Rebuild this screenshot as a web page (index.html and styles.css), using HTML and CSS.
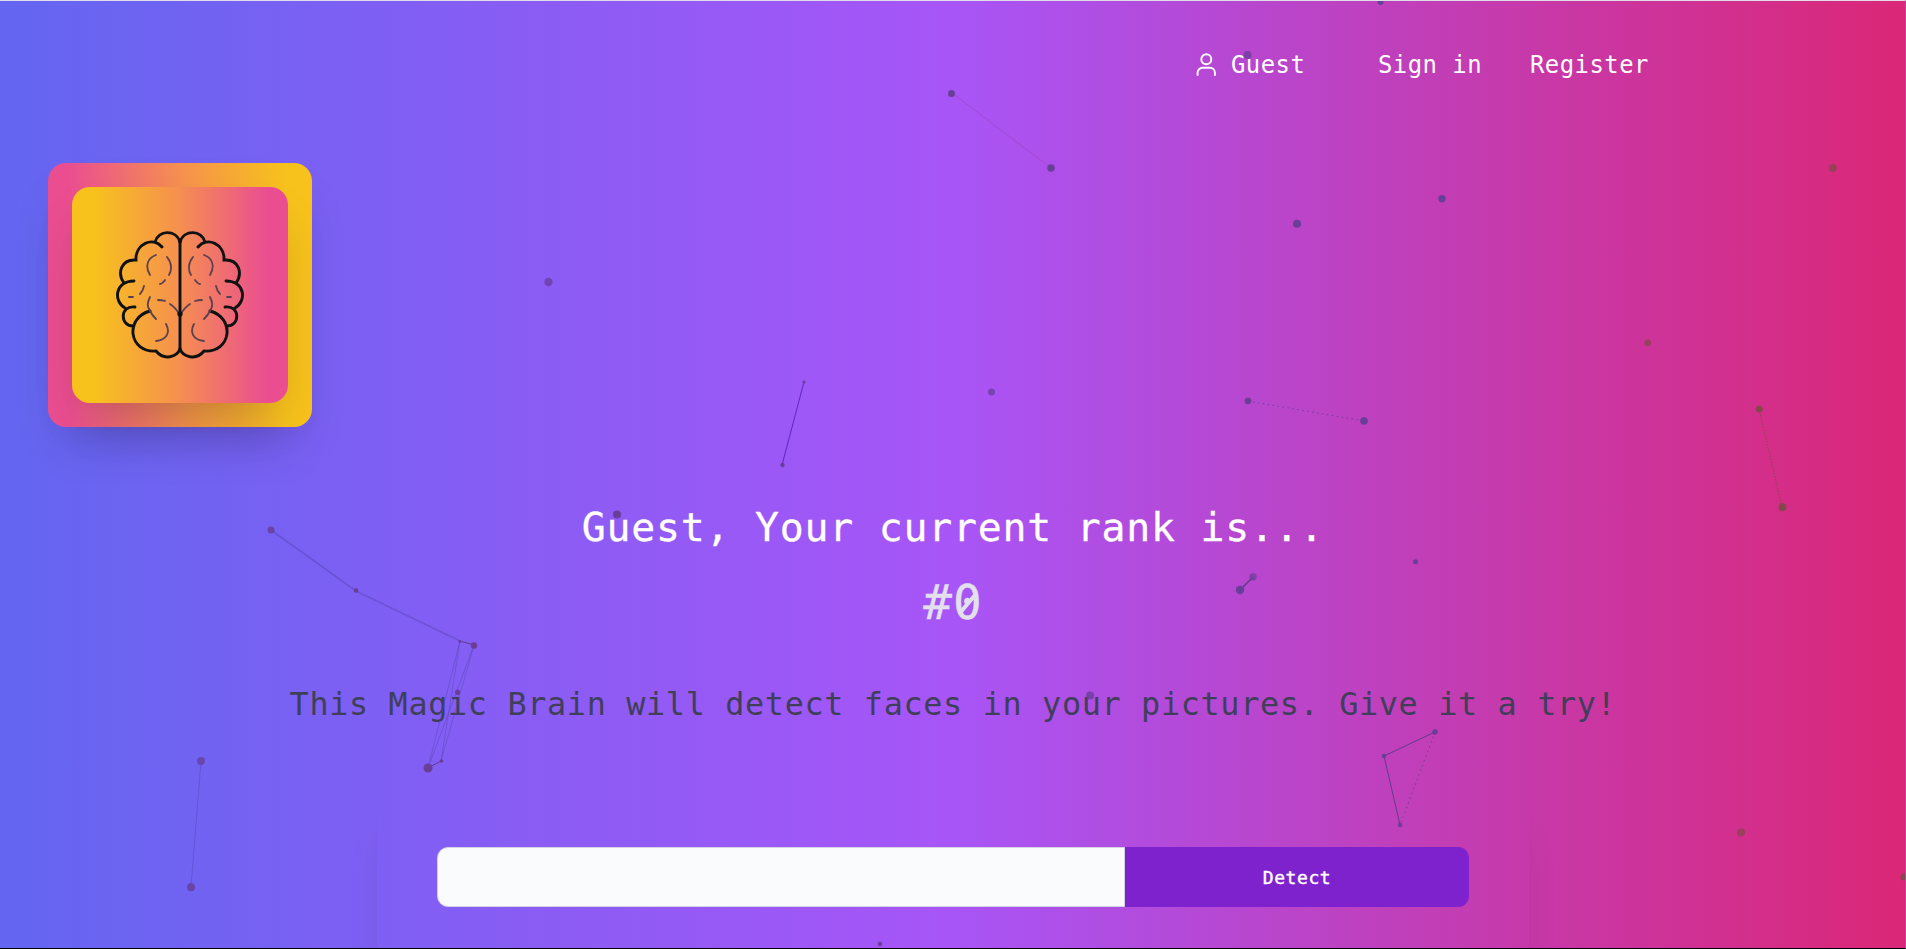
FILE: index.html
```html
<!DOCTYPE html>
<html lang="en">
<head>
<meta charset="utf-8">
<title>Magic Brain</title>
<link rel="stylesheet" href="styles.css">
</head>
<body>
<div class="page">
  <nav class="nav">
    <span class="user">
      <svg class="user-icon" viewBox="0 0 20 24" fill="none" stroke="currentColor" stroke-width="1.9" stroke-linecap="round">
        <circle cx="10.3" cy="6.3" r="5"/>
        <path d="M1.6 22v-2.2a5 5 0 0 1 5-5h7.3a5 5 0 0 1 5 5v2.2"/>
      </svg>
      Guest
    </span>
    <a class="signin">Sign in</a>
    <a class="register">Register</a>
  </nav>
  <div class="logo">
    <div class="logo-inner">
      <svg class="brain" viewBox="0 0 128 128" fill="none" stroke-linecap="round">
        <defs>
          <g id="half">
            <path class="outline" d="M64 11C60-2 42-1 39 11M46 16C37 5 19 13 20 29C5 28 1 42 8 52M18 50C-1 50-3 70 9 77M19 76C3 74 4 96 18 95M34 80C8 87 13 122 40 120C48 130 61 126 64 118"/>
            <path class="fold" d="M40 24C31 27 29 36 34 44M51 26C56 32 56 39 53 44M49 49Q46 53 44 53M28 55Q27 60 24 63M13 66H17M34 66C31 72 31 75 34 80C36 84 38 86 40 88M42 69Q46 69 49 70M54 73Q60 77 63 83M50 93C55 102 50 109 40 110"/>
          </g>
        </defs>
        <use href="#half"/>
        <use href="#half" transform="matrix(-1 0 0 1 128 0)"/>
        <path class="outline" d="M64 10V119"/>
        <circle cx="64" cy="83" r="2.6" fill="#111"/>
      </svg>
    </div>
  </div>
  <main class="main">
    <h1 class="rank-title">Guest, Your current rank is...</h1>
    <div class="rank">#<span class="zero">0</span></div>
    <p class="intro">This Magic Brain will detect faces in your pictures. Give it a try!</p>
    <div class="form-card">
      <div class="form">
        <input class="url" type="text" aria-label="Image address">
        <button class="detect">Detect</button>
      </div>
    </div>
  </main>
  <svg class="particles" viewBox="0 0 1906 949">
    <g class="links">
      <path class="wide" d="M271 530L356 591L460 641"/>
      <path d="M460 641L428 768M460 641L441 761M474 645L428 768M474 645L441 761"/>
      <path d="M201 761L191 887"/>
      <path class="faint" d="M952 93L1051 168"/>
      <path class="dotted-warm" d="M1759 409L1782 507"/>
      <path class="dotted" d="M1248 401L1364 421M1435 732L1400 825"/>
    </g>
    <g class="links strong">
      <path d="M460 641L474 645M428 768L441 761M1435 732L1384 756L1400 825"/>
      <path class="wide" d="M1240 590L1253 577"/>
      <path class="violet" d="M804 382L782 465"/>
    </g>
    <g class="dots">
      <circle cx="1380.500" cy="2" r="3"/><circle cx="1247.500" cy="55" r="4" opacity=".75"/>
      <circle cx="951.500" cy="93.500" r="3.500"/><circle cx="1051" cy="168" r="3.800"/>
      <circle cx="1442" cy="198.700" r="3.700"/><circle cx="1297" cy="223.700" r="4"/>
      <circle cx="548.500" cy="282" r="4.200" opacity=".75"/><circle cx="991.500" cy="392" r="3.500" opacity=".75"/>
      <circle cx="1248" cy="401" r="3.300"/><circle cx="1364" cy="421" r="3.800"/>
      <circle cx="804" cy="382" r="1.500"/><circle cx="782.500" cy="465" r="2.200"/>
      <circle cx="617" cy="514.500" r="4"/><circle cx="271" cy="530" r="3.500" opacity=".85"/>
      <circle cx="356" cy="590.500" r="2.300"/><circle cx="460" cy="641.500" r="1.500"/>
      <circle cx="474" cy="645.500" r="3.200"/><circle cx="457.500" cy="692" r="2.500"/>
      <circle cx="428" cy="768" r="4.500"/><circle cx="441.500" cy="761" r="1.800"/>
      <circle cx="201" cy="761" r="4" opacity=".75"/><circle cx="191" cy="887.300" r="4" opacity=".85"/>
      <circle cx="880" cy="944" r="2.200"/><circle cx="1090" cy="695.500" r="4" opacity=".8"/>
      <circle cx="1240" cy="590" r="4.200"/><circle cx="1253" cy="577" r="3.700" opacity=".7"/>
      <circle cx="1415.500" cy="561.700" r="2.500"/><circle cx="1435" cy="732" r="2.700"/>
      <circle cx="1384" cy="756" r="2.300"/><circle cx="1400" cy="825" r="2.200"/>
    </g>
    <g class="dots warm">
      <circle cx="1832.700" cy="168" r="4" opacity=".8"/><circle cx="1647.700" cy="343" r="3.500" opacity=".75"/>
      <circle cx="1759.300" cy="409" r="3.500"/><circle cx="1782.500" cy="507.300" r="4"/>
      <circle cx="1741" cy="832.500" r="4" opacity=".75"/><circle cx="1904" cy="877" r="3.500"/>
    </g>
  </svg>
</div>
</body>
</html>
```

FILE: styles.css
```css
* {
  box-sizing: border-box;
}

body {
  margin: 0;
  font-family: "DejaVu Sans Mono", "Liberation Mono", monospace;
}

.page {
  position: relative;
  height: 949px;
  overflow: hidden;
  border-top: 1px solid #e0dce8;
  border-right: 1px solid #a04fc8;
  border-bottom: 1px solid #000;
  background: linear-gradient(to right, #6366f1, #a855f7, #db2777);
}

.nav {
  display: flex;
  height: 126px;
  padding-left: 1196px;
  color: #fff;
  font-size: 23.9px;
  line-height: 128px;
  letter-spacing: 0.48px;
}

.user {
  display: flex;
  align-items: center;
  gap: 15px;
  width: 182px;
  height: 128px;
}

.user-icon {
  width: 20px;
  height: 24px;
}

.signin {
  width: 152px;
}

.logo {
  width: 264px;
  height: 264px;
  margin: 36px 0 0 48px;
  padding: 24px;
  border-radius: 18px;
  background: linear-gradient(to right, #ea4e90 8%, #f6934c 52%, #f7c21c 90%);
  box-shadow: 0 27px 50px -16px rgba(0, 0, 0, 0.19);
}

.logo-inner {
  display: flex;
  align-items: center;
  justify-content: center;
  width: 216px;
  height: 216px;
  border-radius: 18px;
  background: linear-gradient(to right, #f7c21c 10%, #f6934c 47%, #ea4e90 90%);
  box-shadow: 0 25px 50px -14px rgba(0, 0, 0, 0.22);
}

.brain {
  width: 128px;
  height: 128px;
  overflow: visible;
}

.outline {
  stroke: #111;
  stroke-width: 2.9;
}

.fold {
  stroke: #5a4050;
  stroke-width: 1.8;
}

.main {
  display: flex;
  flex-direction: column;
  align-items: center;
  margin-right: -1px;
  padding-top: 72px;
}

.rank-title {
  margin: 0;
  color: #fff;
  font-size: 39.8px;
  font-weight: 400;
  line-height: 56px;
  letter-spacing: 0.79px;
  white-space: pre;
  -webkit-text-stroke: 0.3px #fff;
}

.rank {
  margin-top: 21px;
  color: #e2e0ec;
  font-size: 47.7px;
  line-height: 54px;
  letter-spacing: 1px;
  -webkit-text-stroke: 0.3px #e2e0ec;
}

.zero {
  position: relative;
}

/* diagonal stroke of the slashed zero */
.zero::after {
  content: "";
  position: absolute;
  top: 50%;
  left: 3px;
  width: 23px;
  height: 4px;
  margin-top: -1px;
  background: #e2e0ec;
  transform: rotate(-50deg);
}

.intro {
  margin: 47px 0 0;
  color: #3f3f5a;
  font-size: 31.8px;
  line-height: 54px;
  letter-spacing: 0.66px;
  white-space: pre;
}

.form-card {
  width: 1152px;
  height: 260px;
  margin-top: 54px;
  padding: 62px 60px;
  border-radius: 9px;
  box-shadow: 0 40px 40px -14px rgba(0, 0, 0, 0.13);
}

.form {
  display: flex;
  width: 1032px;
  height: 60px;
}

.url {
  width: 688px;
  height: 60px;
  border: 1px solid #d5d2e2;
  border-radius: 11px 0 0 11px;
  background: #fafbfd;
}

.detect {
  flex: 1;
  padding: 0;
  border: 0;
  border-radius: 0 11px 11px 0;
  background: #7e22ce;
  color: #fff;
  font-family: inherit;
  font-size: 18px;
  letter-spacing: 0.55px;
  -webkit-text-stroke: 0.4px #fff;
}

.particles {
  position: absolute;
  top: -1px;
  left: 0;
  width: 1906px;
  height: 949px;
  pointer-events: none;
}

.links {
  fill: none;
  stroke: #5145b5;
  stroke-opacity: 0.45;
}

.wide {
  stroke-width: 1.6;
}

.strong {
  stroke: #563b85;
  stroke-opacity: 0.9;
}

.violet {
  stroke: #5a1fb5;
}

.faint {
  stroke: #a03fb5;
  stroke-opacity: 0.5;
}

.dotted {
  stroke: #653a85;
  stroke-opacity: 0.8;
  stroke-dasharray: 1.5 3.5;
}

.dotted-warm {
  stroke: #86474c;
  stroke-opacity: 0.9;
  stroke-dasharray: 1.5 1.5;
}

.dots {
  fill: #683e99;
}

.warm {
  fill: #86474c;
}
```
